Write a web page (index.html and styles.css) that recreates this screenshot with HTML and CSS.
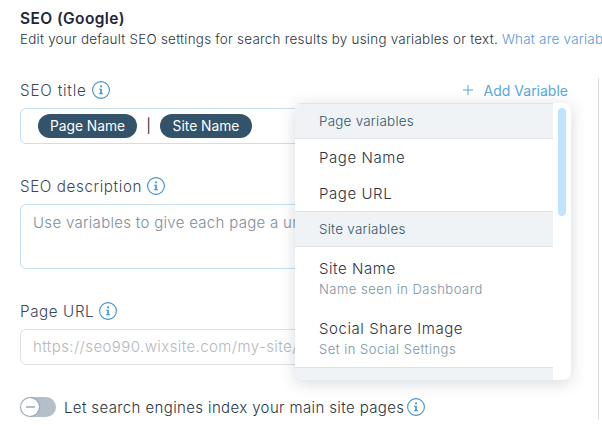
FILE: index.html
```html
<!DOCTYPE html>
<html lang="en">

<head>
    <meta charset="utf-8">
    <meta name="viewport" content="width=device-width, initial-scale=1.0">
    <title>SEO (Google)</title>
    <link rel="stylesheet" href="styles.css">
</head>

<body>
    <svg width="0" height="0" class="symbols">
        <symbol id="info" viewBox="0 0 18 18">
            <circle cx="9" cy="9" r="8.4" fill="none" stroke="currentColor" stroke-width="1.1" />
            <path d="M8.1 4.4h1.9v1.8H8.1zM7.1 7.7h2.7v4.5h1.3v1.1H6.9v-1.1h1.3V8.8H7.1z" fill="currentColor" />
        </symbol>
    </svg>

    <header>
        <h1>SEO (Google)</h1>
        <p><span class="intro">Edit your default SEO settings for search results by using variables or text.</span><a href="#">What are variab</a></p>
    </header>

    <main>
        <section class="field">
            <div class="label-row">
                <label class="label-title">SEO title</label>
                <svg class="info"><use href="#info" /></svg>
                <button class="add">
                    <svg class="plus" viewBox="0 0 10 10"><path d="M5 0v10M0 5h10" stroke="currentColor" /></svg>
                    <span>Add Variable</span>
                </button>
            </div>
            <div class="input tags">
                <span class="tag tag-page">Page Name</span>
                <span class="divider">|</span>
                <span class="tag tag-site">Site Name</span>
            </div>

            <div class="menu">
                <div class="menu-list">
                    <h2>Page variables</h2>
                    <div class="item"><span>Page Name</span></div>
                    <div class="item"><span>Page URL</span></div>
                    <h2>Site variables</h2>
                    <div class="item tall"><span>Site Name</span><small>Name seen in Dashboard</small></div>
                    <div class="item tall"><span>Social Share Image</span><small>Set in Social Settings</small></div>
                    <h2></h2>
                </div>
                <div class="scroll"></div>
            </div>
        </section>

        <section class="field description">
            <div class="label-row">
                <label>SEO description</label>
                <svg class="info"><use href="#info" /></svg>
            </div>
            <div class="input textarea">Use variables to give each page a un</div>
        </section>

        <section class="field url">
            <div class="label-row">
                <label>Page URL</label>
                <svg class="info"><use href="#info" /></svg>
            </div>
            <div class="input disabled">https://seo990.wixsite.com/my-site/</div>
        </section>

        <section class="index">
            <div class="toggle"><div class="knob"></div></div>
            <span class="index-text">Let search engines index your main site pages</span>
            <svg class="info"><use href="#info" /></svg>
        </section>
    </main>
</body>

</html>
```

FILE: styles.css
```css
* {
    box-sizing: border-box;
}

body {
    margin: 0;
    width: 602px;
    height: 425px;
    overflow: hidden;
    background-color: #fff;
    color: #2b3444;
    font-family: Inter, "Open Sans", sans-serif;
    font-weight: 300;
    font-size: 16px;
    white-space: nowrap;
}

.symbols {
    display: block;
}

header {
    height: 78px;
    padding: 8px 0 0 20px;
}

h1 {
    margin: 0;
    font-size: 15.5px;
    line-height: 21px;
    font-weight: 600;
    letter-spacing: 0.4px;
    color: #20263c;
}

header p {
    margin: 0;
    font-size: 13.4px;
    line-height: 20px;
    letter-spacing: 0.25px;
}

header a {
    margin-left: 4px;
    color: #5a96dc;
    text-decoration: none;
}

main {
    width: 599px;
    height: 342px;
    padding: 0 30px 0 20px;
    border-right: 1px solid #dcdfe3;
}

.field {
    position: relative;
}

.label-row {
    display: flex;
    align-items: center;
    height: 24px;
    margin-bottom: 6px;
    gap: 5px;
    font-size: 15.2px;
    color: #3b4759;
}

label {
    letter-spacing: 0.6px;
}

.label-title {
    letter-spacing: 0.8px;
}

.info {
    width: 18px;
    height: 18px;
    flex: none;
    color: #3e92cf;
}

.add {
    display: flex;
    align-items: center;
    gap: 11px;
    margin-left: auto;
    padding: 0;
    border: none;
    background: none;
    color: #57a8dc;
    font-family: inherit;
    font-size: 14px;
    font-weight: 400;
}

.plus {
    width: 10px;
    height: 10px;
}

.input {
    height: 36px;
    padding: 0 12px;
    border: 1px solid #c8e0ed;
    border-radius: 6px;
    line-height: 34px;
    font-size: 15px;
    overflow: hidden;
}

.tags {
    display: flex;
    align-items: center;
    padding-left: 17px;
}

.tag {
    height: 24px;
    border-radius: 12px;
    background-color: #32536a;
    color: #fff;
    font-size: 13.8px;
    font-weight: 400;
    line-height: 24px;
    text-align: center;
}

.tag-page {
    width: 99px;
}

.tag-site {
    width: 92px;
}

.divider {
    width: 23px;
    text-align: center;
    font-size: 14px;
    font-weight: 400;
}

.description {
    margin-top: 30px;
}

.textarea {
    height: 65px;
    line-height: 36px;
    letter-spacing: 0.3px;
    color: #808d99;
}

.url {
    margin-top: 30px;
}

.disabled {
    border-color: #dfe2e5;
    letter-spacing: 0.42px;
    color: #b4b8bd;
}

.index {
    display: flex;
    align-items: center;
    height: 24px;
    margin-top: 30px;
}

.toggle {
    display: flex;
    align-items: center;
    width: 36px;
    height: 20px;
    margin-right: 8px;
    border-radius: 10px;
    background-color: #b5bfcc;
}

.knob {
    display: flex;
    align-items: center;
    justify-content: center;
    width: 18px;
    height: 18px;
    margin-left: 1px;
    border-radius: 50%;
    background-color: #fff;
    box-shadow: 0 0 2px rgba(60, 75, 100, 0.7);
}

.knob::before {
    content: "";
    width: 9px;
    height: 2px;
    background-color: #b5bfcc;
}

.index-text {
    margin-right: 3px;
    font-size: 15px;
    letter-spacing: 0.38px;
}

/* variable picker, opens over the fields */
.menu {
    position: absolute;
    z-index: 1;
    top: 25px;
    left: 275px;
    width: 276px;
    height: 277px;
    display: flex;
    overflow: hidden;
    border-radius: 8px;
    background-color: #fff;
    box-shadow: 0 3px 16px rgba(22, 45, 61, 0.18);
}

.menu-list {
    width: 258px;
}

h2 {
    height: 36px;
    margin: 0;
    padding-left: 24px;
    border: 1px solid #dde3e8;
    border-width: 1px 0;
    background-color: #eff3f6;
    color: #32536a;
    font-size: 13.4px;
    font-weight: 300;
    line-height: 35px;
    letter-spacing: 0.26px;
}

.item {
    display: flex;
    flex-direction: column;
    justify-content: center;
    height: 36px;
    padding: 2px 0 0 24px;
    font-size: 15px;
    line-height: 22px;
    letter-spacing: 0.57px;
}

.tall {
    height: 60px;
    padding-top: 3px;
}

small {
    color: #7a92a5;
    font-size: 13px;
    line-height: 19px;
    letter-spacing: 0.5px;
}

.scroll {
    width: 8px;
    height: 108px;
    margin: 5px 0 0 5px;
    border-radius: 4px;
    background-color: #c1e4fe;
}
```
